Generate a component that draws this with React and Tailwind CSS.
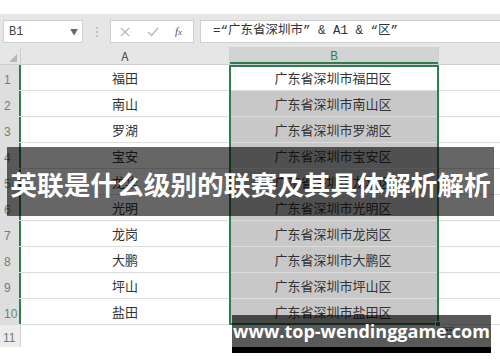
import React from 'react';

const districts = ['福田','南山','罗湖','宝安','龙华','光明','龙岗','大鹏','坪山','盐田'];
const cjk = { fontFamily: '"Noto Sans CJK SC", "Noto Sans", sans-serif' };

export default function App() {
  return (
    <div className="relative w-[500px] h-[362px] bg-white overflow-hidden" style={cjk}>
      <div className="h-[14px]" />
      {/* toolbar */}
      <div className="h-[33px] bg-[#e6e6e6] flex items-start pt-[6px]">
        <div className="ml-[3px] w-[80px] h-[23px] bg-white border border-[#cfcfcf] flex items-center justify-between pl-[5px] pr-[4px]">
          <span className="text-[12px] text-[#444]" style={{ fontFamily: '"Liberation Mono", monospace' }}>B1</span>
          <span className="text-[8px] text-[#666]">▼</span>
        </div>
        <div className="w-[27px] h-[23px] flex flex-col items-center justify-center gap-[2px]">
          <span className="w-[2px] h-[2px] bg-[#b8b8b8] rounded-full" />
          <span className="w-[2px] h-[2px] bg-[#b8b8b8] rounded-full" />
          <span className="w-[2px] h-[2px] bg-[#b8b8b8] rounded-full" />
        </div>
        <div className="w-[84px] h-[23px] bg-white border border-[#cfcfcf] flex items-center">
          <svg width="10" height="10" viewBox="0 0 10 10" className="ml-[9px]">
            <path d="M1 1 L9 9 M9 1 L1 9" stroke="#b5b5b5" strokeWidth="1.2" fill="none" />
          </svg>
          <svg width="12" height="10" viewBox="0 0 12 10" className="ml-[17px]">
            <path d="M1 5 L4.5 8.5 L11 1" stroke="#b5b5b5" strokeWidth="1.2" fill="none" />
          </svg>
          <span className="ml-[16px] text-[11px] italic text-[#555]" style={{ fontFamily: '"Liberation Serif", serif' }}>f<span className="text-[9px]">x</span></span>
        </div>
        <div className="ml-[6px] flex-1 h-[23px] bg-white border border-[#cfcfcf] border-r-0 flex items-center pl-[12px]">
          <span className="text-[12.5px] text-[#333] whitespace-nowrap" style={{ fontFamily: '"Liberation Mono", "Noto Sans CJK SC", monospace' }}>=“广东省深圳市” &amp; A1 &amp; “区”</span>
        </div>
      </div>
      {/* column header row */}
      <div className="h-[18px] flex bg-[#e6e6e6] border-b border-[#cfcfcf]">
        <div className="w-[21px] h-full relative border-r border-[#cfcfcf]">
          <svg width="8" height="8" viewBox="0 0 8 8" className="absolute right-[3px] bottom-[2px]">
            <path d="M8 0 L8 8 L0 8 Z" fill="#b7b7b7" />
          </svg>
        </div>
        <div className="w-[209px] flex items-center justify-center text-[12px] text-[#444] border-r border-[#cfcfcf]">A</div>
        <div className="w-[208px] flex items-center justify-center text-[12px] text-[#2e7d4f] bg-[#d3d3d3] border-b-2 border-[#2e7d4f]">B</div>
        <div className="flex-1 border-l border-[#cfcfcf]" />
      </div>
      {/* rows */}
      {districts.map((d, i) => (
        <div key={d} className="h-[26px] flex border-b border-[#dcdcdc]">
          <div className="w-[21px] bg-[#dedede] border-r-2 border-[#2e7d4f] flex items-end pl-[4px] pb-[1px] text-[12px] text-[#6f7f74]" style={{ fontFamily: '"Liberation Sans", sans-serif' }}>{i + 1}</div>
          <div className="w-[208px] flex items-center justify-center text-[13px] text-[#333]">{d}</div>
          <div className={`w-[208px] flex items-center justify-center text-[13px] text-[#333] ${i === 0 ? 'bg-white' : 'bg-[#c8c8c8]'}`}>广东省深圳市{d}区</div>
          <div className="flex-1" />
        </div>
      ))}
      <div className="h-[22px] flex">
        <div className="w-[21px] bg-[#ececec] border-r border-[#d0d0d0] flex items-end pl-[3px] text-[12px] text-[#777]" style={{ fontFamily: '"Liberation Sans", sans-serif' }}>11</div>
        <div className="flex-1 bg-white" />
      </div>

      {/* selection border */}
      <div className="absolute left-[229px] top-[65px] w-[210px] h-[260px] border-2 border-[#2e7d4f] pointer-events-none" />
      <div className="absolute left-[435px] top-[321px] w-[6px] h-[6px] bg-[#2e7d4f] border border-white" />
      <div className="absolute left-[442px] top-[327px] w-[12px] h-[8px] border border-[#b0b0b0] bg-white flex gap-[1px] p-[1px]">
        <span className="w-[4px] h-[2px] bg-[#3b6fc4]" />
        <span className="w-[4px] h-[2px] bg-[#888]" />
      </div>

      {/* title banner */}
      <div className="absolute left-[7px] top-[147px] w-[487px] h-[69px] bg-black/60 flex items-center justify-center pt-[6px]">
        <span className="text-[26.7px] font-bold text-white whitespace-nowrap leading-none">英联是什么级别的联赛及其具体解析解析</span>
      </div>

      {/* watermark */}
      <div className="absolute left-[232px] top-[315px] w-[259px] h-[38px] flex flex-col">
        <div className="flex-1 bg-black/65 flex items-center justify-center">
          <span className="text-[18px] font-bold text-white whitespace-nowrap" style={{ fontFamily: '"Open Sans", sans-serif' }}>www.top-wendinggame.com</span>
        </div>
        <div className="h-[6px] bg-black" />
      </div>
    </div>
  );
}
